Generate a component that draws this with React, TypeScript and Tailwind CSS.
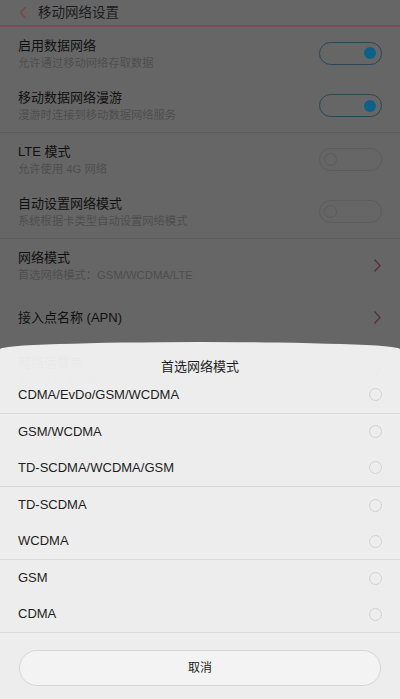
const font = "font-['Liberation_Sans','Noto_Sans_CJK_SC',sans-serif]";

const Toggle = ({ on }: { on: boolean }) =>
  on ? (
    <div className="w-[63px] h-[23px] rounded-full border-[1.5px] border-[#2b4651] flex items-center justify-end pr-[5px]">
      <div className="w-[12px] h-[12px] rounded-full bg-[#0c6189]" />
    </div>
  ) : (
    <div className="w-[63px] h-[23px] rounded-full border-[1.5px] border-[#5c5c5c] flex items-center pl-[4px]">
      <div className="w-[13px] h-[13px] rounded-full border-[1.5px] border-[#5c5c5c]" />
    </div>
  );

const Chevron = () => (
  <svg width="9" height="15" viewBox="0 0 9 15" fill="none">
    <path d="M1.5 1.5 L7 7.5 L1.5 13.5" stroke="#5a2f3c" strokeWidth="1.4" />
  </svg>
);

const SettingRow = ({
  title,
  sub,
  right,
}: {
  title: string;
  sub?: string;
  right?: React.ReactNode;
}) => (
  <div className="h-[52.5px] flex items-center justify-between pl-[18px] pr-[18px]">
    <div className="flex flex-col pt-[1px]">
      <span className="text-[13px] leading-[18px] text-[#111111]">{title}</span>
      {sub && (
        <span className="text-[11.3px] leading-[16px] text-[#4e4e4e]">{sub}</span>
      )}
    </div>
    {right}
  </div>
);

const Radio = () => (
  <div className="w-[13px] h-[13px] rounded-full border border-[#d2d2d2]" />
);

export default function App() {
  const options = [
    { label: "CDMA/EvDo/GSM/WCDMA", line: true },
    { label: "GSM/WCDMA", line: false },
    { label: "TD-SCDMA/WCDMA/GSM", line: true },
    { label: "TD-SCDMA", line: false },
    { label: "WCDMA", line: true },
    { label: "GSM", line: false },
    { label: "CDMA", line: true },
  ];

  return (
    <div className={`relative w-[400px] h-[699px] overflow-hidden bg-[#666666] ${font}`}>
      {/* header */}
      <div className="h-[27px] flex items-center gap-[11px] pl-[19px] border-b-2 border-[#7d4a55]">
        <svg width="8" height="13" viewBox="0 0 8 13" fill="none">
          <path d="M6.5 1 L1.5 6.5 L6.5 12" stroke="#7a4350" strokeWidth="1.4" />
        </svg>
        <span className="text-[13.5px] leading-[18px] text-[#1c1c1c]">移动网络设置</span>
      </div>

      <div className="border-b border-[#5c5c5c]">
        <SettingRow title="启用数据网络" sub="允许通过移动网络存取数据" right={<Toggle on />} />
        <SettingRow title="移动数据网络漫游" sub="漫游时连接到移动数据网络服务" right={<Toggle on />} />
      </div>
      <div className="border-b border-[#5c5c5c]">
        <SettingRow title="LTE 模式" sub="允许使用 4G 网络" right={<Toggle on={false} />} />
        <SettingRow title="自动设置网络模式" sub="系统根据卡类型自动设置网络模式" right={<Toggle on={false} />} />
      </div>
      <SettingRow title="网络模式" sub="首选网络模式：GSM/WCDMA/LTE" right={<Chevron />} />
      <SettingRow title="接入点名称 (APN)" right={<Chevron />} />
      <SettingRow title="网络运营商" sub="中国联通 3GNET" right={<Chevron />} />

      {/* bottom sheet */}
      <div className="absolute left-0 right-0 bottom-0 h-[357px] bg-[#f4f4f4]/[0.95] rounded-t-[200px_7px] flex flex-col">
        <div className="h-[35px] pt-[15px] text-center text-[13px] leading-[20px] text-[#1e1e1e]">
          首选网络模式
        </div>
        <div className="flex flex-col">
          {options.map((o) => (
            <div
              key={o.label}
              className={`h-[36.6px] flex items-center justify-between pl-[18px] pr-[18px] ${
                o.line ? "border-b border-[#dadada]" : ""
              }`}
            >
              <span className="text-[13px] leading-[18px] text-[#1e1e1e]">{o.label}</span>
              <Radio />
            </div>
          ))}
        </div>
        <div className="px-[19px] pt-[17px]">
          <div className="h-[36px] rounded-full border border-[#d6d6d6] bg-[#f3f3f3] flex items-center justify-center">
            <span className="text-[12px] leading-[16px] text-[#222222]">取消</span>
          </div>
        </div>
      </div>
    </div>
  );
}
